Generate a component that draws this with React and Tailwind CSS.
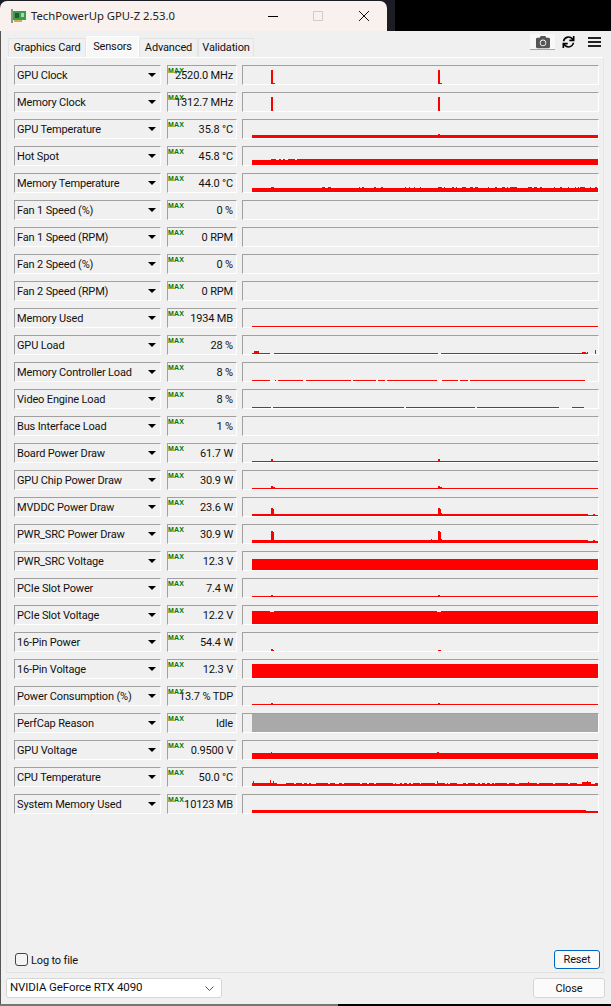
import { FaCamera, FaSync } from 'react-icons/fa';

// bars are [x, width, height] in page x, sitting on the graph floor
const line = (h) => [[252, 346, h]];
const spike = (x, h, foot = 0) => [[x, 2, h], ...(foot ? [[x + 2, 2, foot]] : [])];

const memTempBumps = [
  [271, 3], [322, 3], [328, 3], [359, 1], [362, 2], [374, 2], [381, 2], [405, 1], [409, 1], [414, 1], [420, 1],
  [438, 4], [444, 1], [452, 2], [456, 1], [462, 4], [470, 3], [475, 3], [488, 1], [495, 2], [502, 3], [507, 1],
  [510, 7], [528, 4], [534, 3], [540, 2], [554, 1], [560, 2], [568, 1], [575, 1], [578, 1], [580, 5], [590, 1], [595, 2],
].map(([x, w]) => [x, w, 5]);

const cpuSegments = [
  [252, 277], [286, 294], [296, 302], [304, 307], [309, 311], [316, 328], [330, 335], [339, 342], [344, 360],
  [362, 367], [369, 374], [376, 393], [395, 396], [400, 402], [404, 407], [409, 411], [413, 420], [421, 435],
  [437, 445], [447, 448], [450, 457], [463, 466], [468, 475], [478, 480], [482, 485], [487, 490], [492, 494],
  [495, 507], [509, 515], [519, 528], [529, 537], [539, 553], [555, 568], [570, 577], [595, 598],
].map(([a, b]) => [a, b - a, 3]);

const segs = (list, h = 1) => list.map(([a, b]) => [a, b - a, h]);

const sensors = [
  { label: 'GPU Clock', value: '2520.0 MHz', bars: [...spike(271, 14, 1), ...spike(438, 14, 1)] },
  { label: 'Memory Clock', value: '1312.7 MHz', bars: [...spike(271, 14), ...spike(438, 14)] },
  { label: 'GPU Temperature', value: '35.8 °C', bars: [...line(3), [438, 2, 4]] },
  {
    label: 'Hot Spot',
    value: '45.8 °C',
    bars: [[252, 346, 5], [271, 5, 6], [279, 2, 6], [283, 2, 6], [288, 7, 6], [297, 301, 6]],
  },
  { label: 'Memory Temperature', value: '44.0 °C', bars: [...line(4), ...memTempBumps] },
  { label: 'Fan 1 Speed (%)', value: '0 %', bars: [] },
  { label: 'Fan 1 Speed (RPM)', value: '0 RPM', bars: [] },
  { label: 'Fan 2 Speed (%)', value: '0 %', bars: [] },
  { label: 'Fan 2 Speed (RPM)', value: '0 RPM', bars: [] },
  { label: 'Memory Used', value: '1934 MB', bars: line(1) },
  {
    label: 'GPU Load',
    value: '28 %',
    bars: [...segs([[252, 270], [274, 438], [441, 588]]), [254, 5, 3], [582, 4, 2], [587, 1, 2], [595, 1, 4]],
  },
  {
    label: 'Memory Controller Load',
    value: '8 %',
    bars: segs([[252, 270], [275, 276], [278, 303], [306, 351], [353, 376], [378, 385], [387, 437], [442, 458], [460, 468], [470, 585]]),
  },
  {
    label: 'Video Engine Load',
    value: '8 %',
    bars: segs([[252, 271], [273, 404], [406, 475], [477, 559], [572, 584]]),
  },
  { label: 'Bus Interface Load', value: '1 %', bars: [] },
  { label: 'Board Power Draw', value: '61.7 W', bars: [...line(1), [271, 2, 3], [438, 2, 3]] },
  { label: 'GPU Chip Power Draw', value: '30.9 W', bars: [...line(1), ...spike(271, 3, 2), ...spike(438, 3, 2)] },
  {
    label: 'MVDDC Power Draw',
    value: '23.6 W',
    bars: [[252, 336, 2], [588, 5, 1], [593, 2, 2], [595, 3, 1], [271, 2, 8], [273, 1, 7], [438, 2, 8], [440, 1, 7], [441, 1, 3]],
  },
  {
    label: 'PWR_SRC Power Draw',
    value: '30.9 W',
    bars: [[252, 336, 3], [588, 5, 2], [593, 2, 3], [595, 3, 2], [271, 2, 12], [273, 1, 11], [431, 1, 4], [438, 2, 12], [440, 1, 11], [441, 1, 4]],
  },
  { label: 'PWR_SRC Voltage', value: '12.3 V', bars: line(11) },
  { label: 'PCIe Slot Power', value: '7.4 W', bars: [...line(1), [271, 2, 2], [438, 2, 2]] },
  {
    label: 'PCIe Slot Voltage',
    value: '12.2 V',
    bars: [[252, 18, 13], [270, 4, 12], [274, 163, 13], [437, 4, 12], [441, 157, 13]],
  },
  { label: '16-Pin Power', value: '54.4 W', bars: [[271, 2, 2], [273, 1, 1], [438, 3, 1]] },
  { label: '16-Pin Voltage', value: '12.3 V', bars: line(14) },
  { label: 'Power Consumption (%)', value: '13.7 % TDP', bars: [...line(1), [271, 2, 2], [438, 2, 2]] },
  { label: 'PerfCap Reason', value: 'Idle', bars: line(18), fill: '#a9a9a9' },
  { label: 'GPU Voltage', value: '0.9500 V', bars: [...line(6), [271, 1, 7], [437, 2, 7]] },
  {
    label: 'CPU Temperature',
    value: '50.0 °C',
    bars: [...line(2), ...cpuSegments, [253, 1, 5], [270, 1, 6], [273, 1, 5], [437, 1, 5], [528, 1, 4], [582, 5, 4], [587, 1, 5], [588, 3, 4]],
  },
  { label: 'System Memory Used', value: '10123 MB', bars: [[252, 334, 3], [586, 12, 2]] },
];

const sunken = 'border-t border-l border-t-[#a0a0a0] border-l-[#a0a0a0] border-r border-b border-r-white border-b-white';

const Graph = ({ bars, fill = '#ff0000' }) => (
  <div className={`w-[357px] h-5 ${sunken}`}>
    <svg width="355" height="18" shapeRendering="crispEdges" className="block">
      {bars.map(([x, w, h], i) => (
        <rect key={i} x={x - 243} y={18 - h} width={w} height={h} fill={fill} />
      ))}
    </svg>
  </div>
);

const SensorRow = ({ sensor }) => (
  <div className="flex h-5 mb-[7px]">
    <div className={`w-[147px] h-5 flex items-center justify-between pl-[2px] pr-[4px] ${sunken}`}>
      <span className="leading-none whitespace-nowrap pt-[1px]">{sensor.label}</span>
      <div className="w-0 h-0 border-l-[4px] border-r-[4px] border-t-[4px] border-l-transparent border-r-transparent border-t-black" />
    </div>
    <div className={`relative w-[70px] h-5 ml-[6px] mr-[5px] flex items-center justify-end pr-[3px] ${sunken}`}>
      <span className="leading-none whitespace-nowrap pt-[1px]">{sensor.value}</span>
      <span className="absolute left-0 top-[1px] text-[7px] leading-[8px] font-bold text-[#007a00] tracking-[0.2px] font-['Liberation_Sans',sans-serif]">
        MAX
      </span>
    </div>
    <Graph bars={sensor.bars} fill={sensor.fill} />
  </div>
);

const tabs = [
  { name: 'Graphics Card', width: 'w-[78px]' },
  { name: 'Sensors', width: 'w-[53px]', active: true },
  { name: 'Advanced', width: 'w-[59px]' },
  { name: 'Validation', width: 'w-[56px]' },
];

const CardIcon = () => (
  <svg width="15" height="14" viewBox="0 0 15 14" shapeRendering="crispEdges" className="block">
    <rect x="0" y="0" width="2" height="14" fill="#8a9a8a" />
    <rect x="2" y="2" width="13" height="9" fill="#3f9a4a" />
    <rect x="3" y="11" width="8" height="2" fill="#c8b050" />
    <rect x="4" y="4" width="4" height="5" fill="#1f5f2f" />
    <rect x="10" y="4" width="3" height="4" fill="#a8d8a8" />
  </svg>
);

const App = () => {
  return (
    <div className="w-[611px] h-[1006px] bg-black overflow-hidden flex flex-col text-[11px] tracking-[-0.15px] text-[#111] font-['Roboto',sans-serif]">
      {/* title bar */}
      <div className="flex h-[31px] shrink-0">
        <div className="w-[395px] bg-[#1c1c24] pt-[1px]">
          <div className="w-[387px] h-[30px] bg-[#f8f1ee] rounded-t-[7px] flex items-center pl-[11px]">
            <CardIcon />
            <span className="ml-[5px] text-[11.3px] tracking-normal text-[#222] whitespace-nowrap font-['Noto_Sans',sans-serif]">
              TechPowerUp GPU-Z 2.53.0
            </span>
            <div className="ml-auto mr-[35px] w-[10px] h-px bg-black" />
            <div className="mr-[36px] w-[10px] h-[10px] border border-[#ccc]" />
            <svg width="10" height="10" viewBox="0 0 10 10" className="mr-[18px]">
              <path d="M0 0 L10 10 M10 0 L0 10" stroke="#111" strokeWidth="1" />
            </svg>
          </div>
        </div>
      </div>

      {/* window body */}
      <div className="flex-1 bg-[#f0f0f0] border-l border-[#555] flex flex-col">
        <div className="flex items-end justify-between h-[26px] pl-[7px] shrink-0">
          <div className="flex items-end">
            {tabs.map((tab) => (
              <div
                key={tab.name}
                className={`${tab.width} flex items-center justify-center whitespace-nowrap border-t border-l border-r ${
                  tab.active
                    ? 'h-[21px] bg-[#f8f8f8] border-white rounded-t-[2px]'
                    : 'h-[19px] bg-[#f0f0f0] border-[#e4e4e4]'
                }`}
              >
                {tab.name}
              </div>
            ))}
          </div>
          <div className="flex items-center self-start mt-[3px] mr-[10px]">
            <div className="w-[25px] h-[16px] border-b border-[#a8a8a8] bg-[#f8f8f8] flex items-center justify-center">
              <FaCamera className="text-[#555] w-[16px] h-[14px]" />
            </div>
            <FaSync className="ml-[7px] text-black w-[13px] h-[12px]" />
            <svg width="13" height="11" viewBox="0 0 13 11" shapeRendering="crispEdges" className="ml-[13px]">
              <rect y="0" width="13" height="2" fill="#222" />
              <rect y="4" width="13" height="2" fill="#222" />
              <rect y="8" width="13" height="2" fill="#222" />
            </svg>
          </div>
        </div>

        {/* sensors panel */}
        <div className="ml-[5px] w-[598px] h-[916px] shrink-0 border border-t-white border-x-[#e6e6e6] border-b-[#e0e0e0] pt-[7px] pl-[7px] flex flex-col">
          {sensors.map((sensor) => (
            <SensorRow key={sensor.label} sensor={sensor} />
          ))}
          <div className="mt-auto mb-[3px] flex items-center justify-between pr-[3px] pl-[1px]">
            <label className="flex items-center">
              <span className="w-[13px] h-[13px] border border-[#444] rounded-[3px] bg-[#f4f4f4]" />
              <span className="ml-[3px] pt-[2px] leading-none">Log to file</span>
            </label>
            <button className="w-[46px] h-[19px] bg-[#fbfbfb] border border-[#0067c0] rounded-[3px] leading-none">
              Reset
            </button>
          </div>
        </div>

        {/* footer */}
        <div className="flex items-start justify-between pl-[5px] pr-[6px] pt-[5px]">
          <div className="w-[216px] h-[20px] bg-white border border-[#d6d6d6] rounded-[3px] flex items-center justify-between pl-[3px] pr-[7px]">
            <span className="whitespace-nowrap text-[11.5px] tracking-[-0.1px]">NVIDIA GeForce RTX 4090</span>
            <svg width="9" height="5" viewBox="0 0 9 5">
              <path d="M0.5 0.5 L4.5 4.5 L8.5 0.5" fill="none" stroke="#555" strokeWidth="1" />
            </svg>
          </div>
          <button className="w-[72px] h-[20px] bg-[#fbfbfb] border border-[#d6d6d6] rounded-[3px] leading-none">
            Close
          </button>
        </div>
      </div>

      {/* strip under the window */}
      <div className="flex h-[2px] shrink-0">
        <div className="w-[338px] bg-[#777]" />
      </div>
    </div>
  );
};

export default App;
